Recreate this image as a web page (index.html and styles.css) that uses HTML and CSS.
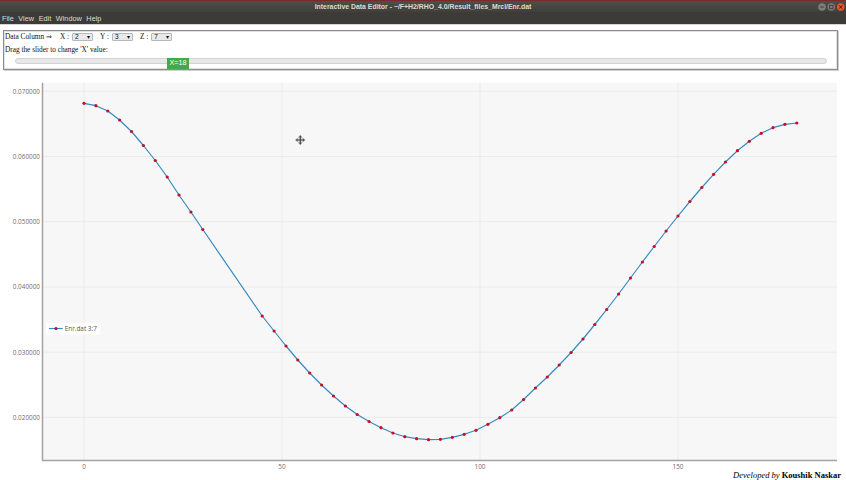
FILE: index.html
```html
<!DOCTYPE html>
<html>
<head>
<meta charset="utf-8">
<title>Interactive Data Editor</title>
<link rel="stylesheet" href="styles.css">
</head>
<body>
<div class="window">
  <header class="titlebar">
    <span></span>
    <span class="title">Interactive Data Editor - ~/F+H2/RHO_4.0/Result_files_Mrcl/Enr.dat</span>
    <span class="wbtns">
      <svg width="27" height="10" viewBox="0 0 27 10">
        <circle cx="4" cy="5" r="3.8" fill="#7e7d78"/>
        <rect x="2.2" y="4.5" width="3.6" height="1" fill="#3c3b37"/>
        <circle cx="13.3" cy="5" r="3.8" fill="#7e7d78"/>
        <rect x="11.6" y="3.3" width="3.4" height="3.4" fill="none" stroke="#3c3b37" stroke-width="0.9"/>
        <circle cx="22.7" cy="5" r="3.8" fill="#e9562b"/>
        <path d="M21.1 3.4 L24.3 6.6 M24.3 3.4 L21.1 6.6" stroke="#3a1a10" stroke-width="1"/>
      </svg>
    </span>
  </header>
  <nav class="menubar">
    <span>File</span><span>View</span><span>Edit</span><span>Window</span><span>Help</span>
  </nav>
  <main class="content">
    <section class="controls">
      <div class="row">
        <span class="lbl">Data Column &#8658;</span>
        <span class="axis">X :</span><span class="sel"><span>2</span><span class="caret">&#9662;</span></span>
        <span class="axis">Y :</span><span class="sel"><span>3</span><span class="caret">&#9662;</span></span>
        <span class="axis">Z :</span><span class="sel"><span>7</span><span class="caret">&#9662;</span></span>
      </div>
      <div class="row row2">Drag the slider to change 'X' value:</div>
      <div class="slider">
        <div class="track"></div>
        <div class="handle">X=18</div>
      </div>
    </section>
    <svg class="chart" width="846" height="400" viewBox="0 70 846 400">
      <defs>
        <marker id="dot" markerWidth="5" markerHeight="5" refX="2.5" refY="2.5" markerUnits="userSpaceOnUse">
          <circle cx="2.5" cy="2.5" r="1.6" fill="#c40f26"/>
        </marker>
      </defs>
      <rect x="42" y="82.7" width="795" height="377.3" fill="#f7f7f7"/>
      <g stroke="#ebebeb" stroke-width="1">
        <line x1="84" y1="82.7" x2="84" y2="460"/>
        <line x1="282" y1="82.7" x2="282" y2="460"/>
        <line x1="480" y1="82.7" x2="480" y2="460"/>
        <line x1="678" y1="82.7" x2="678" y2="460"/>
        <line x1="42" y1="91.2" x2="837" y2="91.2"/>
        <line x1="42" y1="156.5" x2="837" y2="156.5"/>
        <line x1="42" y1="221.7" x2="837" y2="221.7"/>
        <line x1="42" y1="287" x2="837" y2="287"/>
        <line x1="42" y1="352.2" x2="837" y2="352.2"/>
        <line x1="42" y1="417.4" x2="837" y2="417.4"/>
      </g>
      <g stroke="#a3a3a3" stroke-width="1.5">
        <line x1="42.5" y1="82.7" x2="42.5" y2="460.5"/>
        <line x1="42" y1="460.5" x2="837" y2="460.5"/>
      </g>
      <g class="ticks ytick" text-anchor="end">
        <text x="40" y="93.5">0.070000</text>
        <text x="40" y="158.8">0.060000</text>
        <text x="40" y="224">0.050000</text>
        <text x="40" y="289.3">0.040000</text>
        <text x="40" y="354.5">0.030000</text>
        <text x="40" y="419.7">0.020000</text>
      </g>
      <g class="ticks xtick" text-anchor="middle">
        <text x="84" y="468.5">0</text>
        <text x="282" y="468.5">50</text>
        <text x="480" y="468.5">100</text>
        <text x="678" y="468.5">150</text>
      </g>
      <polyline fill="none" stroke="#3a89c1" stroke-width="1.2" stroke-linejoin="round"
        marker-start="url(#dot)" marker-mid="url(#dot)" marker-end="url(#dot)"
        points="84,103.3 95.9,105.7 107.8,111 119.6,120 131.5,131.5 143.4,145.5 155.3,160.5 167.2,177 179,195 190.9,212 202.8,229.5 262.2,316 274.1,331 286,346 297.8,360 309.7,373 321.6,385 333.5,396 345.4,406 357.2,414.5 369.1,421.5 381,427.7 392.9,433 404.8,436.7 416.6,438.7 428.5,439.7 440.4,439.3 452.3,437.3 464.2,434.3 476,430.3 487.9,424.3 499.8,417.7 511.7,410 523.6,399.5 535.4,388 547.3,377 559.2,365 571.1,352.5 583,339 594.8,324.5 606.7,309.5 618.6,294 630.5,278 642.4,262 654.2,246.5 666.1,231 678,216 689.9,201.5 701.8,187.5 713.6,174.3 725.5,162 737.4,150.7 749.3,141.3 761.2,133.3 773,127.7 784.9,124.3 796.8,123"/>
      <g class="legend">
        <rect x="46" y="323.3" width="54" height="11.4" fill="#ffffff"/>
        <line x1="49" y1="328.5" x2="62.7" y2="328.5" stroke="#3a89c1" stroke-width="1.2"/>
        <circle cx="56" cy="328.5" r="1.6" fill="#c40f26"/>
        <text x="64.7" y="330.8">Enr.dat 3:7</text>
      </g>
      <g class="cursor" transform="translate(300.3 140)">
        <path d="M0 -5 L-2 -2.6 L-0.8 -2.6 L-0.8 -0.8 L-2.6 -0.8 L-2.6 -2 L-5 0 L-2.6 2 L-2.6 0.8 L-0.8 0.8 L-0.8 2.6 L-2 2.6 L0 5 L2 2.6 L0.8 2.6 L0.8 0.8 L2.6 0.8 L2.6 2 L5 0 L2.6 -2 L2.6 -0.8 L0.8 -0.8 L0.8 -2.6 L2 -2.6 Z"
          fill="#4a4a4a" stroke="#bdbdbd" stroke-width="0.5"/>
      </g>
    </svg>
    <footer class="credit"><em>Developed by</em> <b>Koushik Naskar</b></footer>
  </main>
</div>
</body>
</html>
```
FILE: styles.css
```css
html, body {
  margin: 0;
  padding: 0;
  background: #ffffff;
}
.window {
  width: 846px;
  height: 480px;
  overflow: hidden;
  display: flex;
  flex-direction: column;
}
.titlebar {
  box-sizing: border-box;
  height: 12px;
  border-top: 1px solid #7a2b24;
  background: linear-gradient(#4e4d48, #403f3b);
  display: grid;
  grid-template-columns: 1fr auto 1fr;
  align-items: center;
}
.title {
  font-family: "Liberation Sans", Arial, sans-serif;
  font-weight: bold;
  font-size: 6.9px;
  color: #dfdbd2;
  white-space: nowrap;
  line-height: 10px;
}
.wbtns {
  justify-self: end;
  padding-right: 1px;
  display: flex;
  align-items: center;
  height: 10px;
}
.wbtns svg { display: block; }
.menubar {
  box-sizing: border-box;
  height: 13px;
  background: #3c3b37;
  border-bottom: 1px solid #d6d6d6;
  display: flex;
  align-items: center;
  gap: 4.6px;
  padding-left: 2px;
  font-family: "Liberation Sans", Arial, sans-serif;
  font-size: 7.3px;
  color: #dfdbd2;
}
.content {
  flex: 1;
  display: flex;
  flex-direction: column;
}
.controls {
  box-sizing: border-box;
  margin: 5px 0 0 3px;
  width: 835px;
  height: 40px;
  border: 1px solid #8d8d8d;
  box-shadow: inset 0 0 0 1px #e2e2e2, 1px 1px 0 #cfcfcf;
  padding: 0 0 0 1px;
  font-family: "Liberation Serif", "Times New Roman", serif;
  font-size: 7.3px;
  color: #111;
}
.row {
  height: 11px;
  display: flex;
  align-items: center;
}
.lbl { margin-right: 8px; }
.axis { margin-right: 3px; }
.sel {
  box-sizing: border-box;
  width: 21px;
  height: 8px;
  background: #e9e9e9;
  border: 1px solid #b8b8b8;
  border-radius: 1px;
  display: flex;
  align-items: center;
  justify-content: space-between;
  padding: 0 2px 0 2px;
  font-family: "Liberation Sans", Arial, sans-serif;
  font-size: 6.5px;
  margin-right: 7px;
}
.caret { font-size: 5.5px; }
.row2 { margin-top: 2px; }
.slider {
  position: relative;
  margin: 3px 0 0 10px;
  width: 812px;
  height: 11px;
}
.track {
  box-sizing: border-box;
  margin-top: 2.5px;
  height: 5.5px;
  background: #e8e8e8;
  border: 1px solid #d2d2d2;
  border-radius: 3px;
}
.handle {
  position: absolute;
  left: 152px;
  top: 0;
  width: 22px;
  height: 10.5px;
  background: #41ab4a;
  color: #ffffff;
  font-family: "Liberation Sans", Arial, sans-serif;
  font-size: 7.3px;
  line-height: 10.5px;
  text-align: center;
}
.chart {
  display: block;
  margin-top: 0;
}
.ticks text {
  font-family: "Open Sans", "Liberation Sans", sans-serif;
  font-size: 6.4px;
  fill: #6e6e6e;
}
.legend text {
  font-family: "Open Sans", "Liberation Sans", sans-serif;
  font-size: 6.4px;
  fill: #555555;
}
.credit {
  height: 10px;
  line-height: 10px;
  text-align: right;
  padding-right: 5px;
  font-family: "Liberation Serif", "Times New Roman", serif;
  font-size: 8.5px;
  color: #000;
}
.credit b { font-weight: bold; }
```
